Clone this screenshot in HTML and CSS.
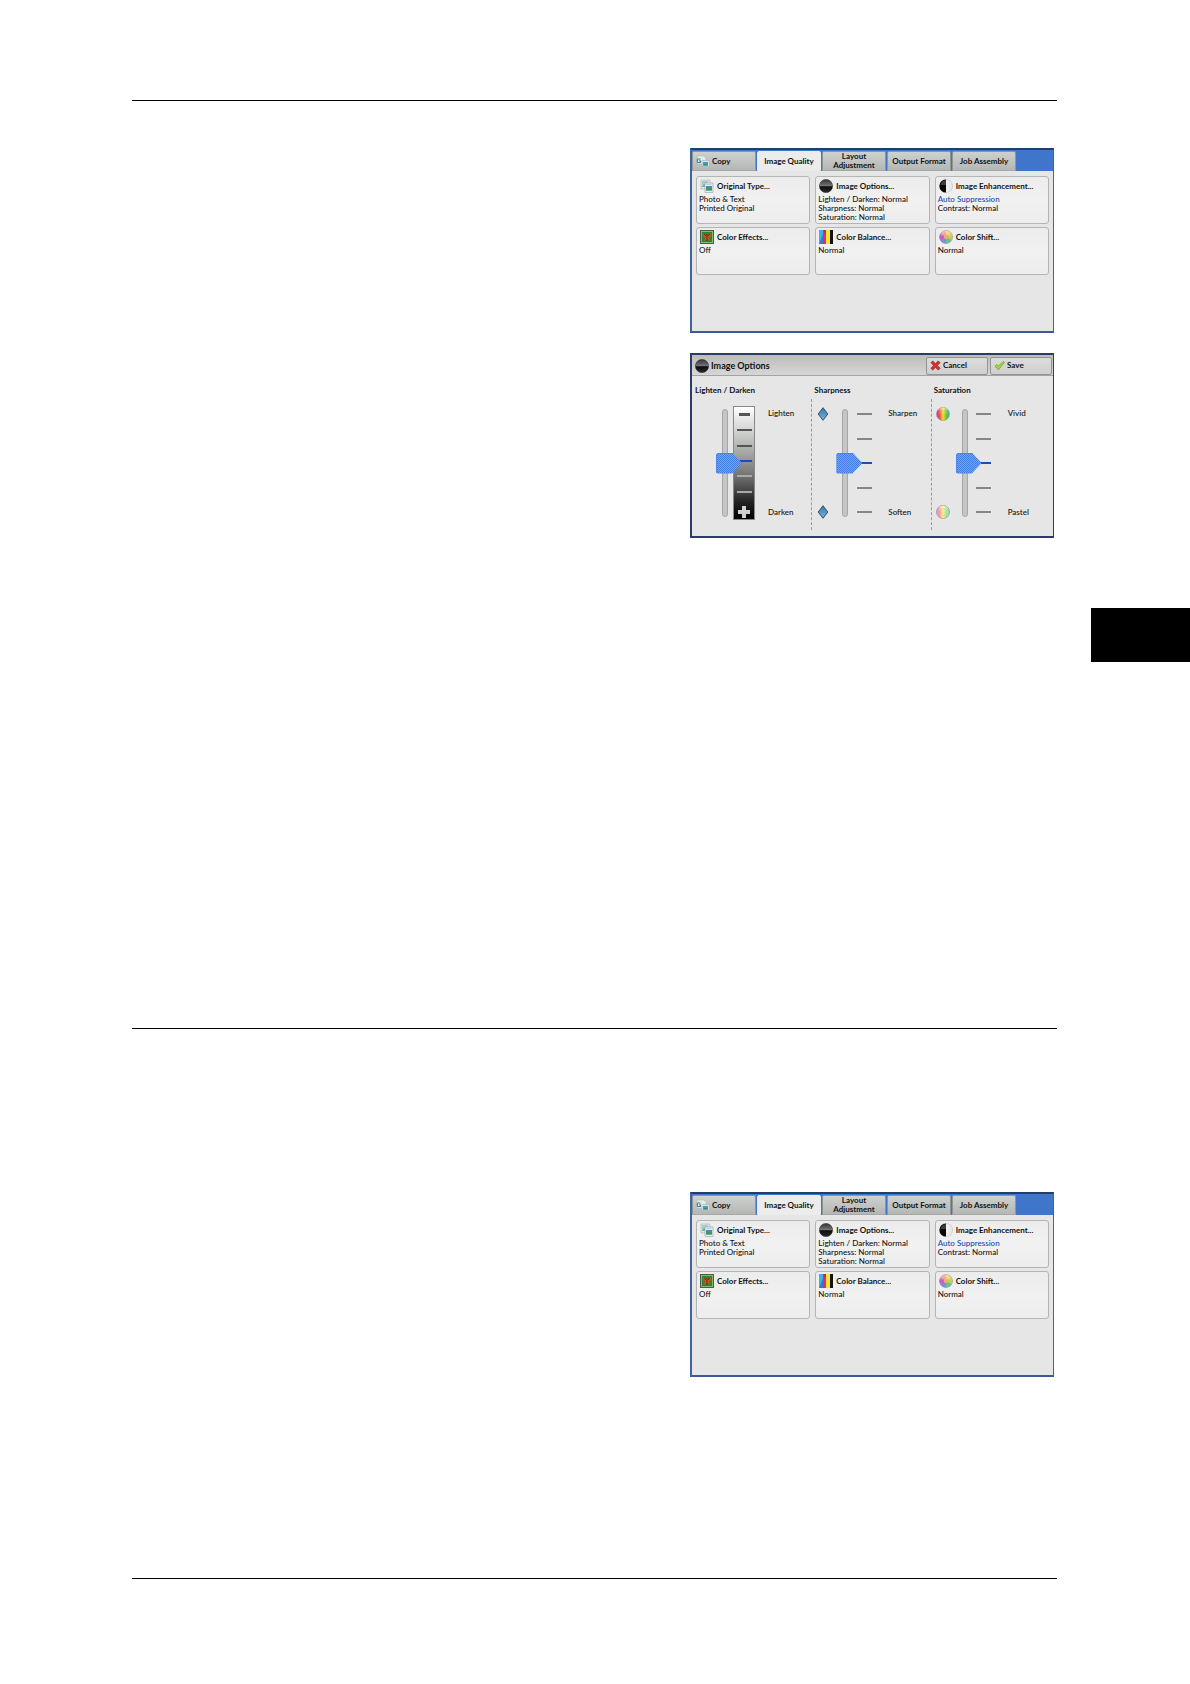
FILE: index.html
```html
<!DOCTYPE html>
<html lang="en">
<head>
  <meta charset="UTF-8">
  <meta name="viewport" content="width=device-width, initial-scale=1.0">
  <title>Image Quality</title>
  <link rel="stylesheet" href="styles.css">
</head>
<body>
  <!-- shared icons -->
  <svg class="sprite" width="0" height="0" aria-hidden="true">
    <defs>
      <linearGradient id="gBall" x1="0" y1="0" x2="0" y2="1">
        <stop offset="0" stop-color="#333"/>
        <stop offset=".5" stop-color="#777"/>
        <stop offset=".55" stop-color="#0c0c0c"/>
        <stop offset="1" stop-color="#2a2a2a"/>
      </linearGradient>
      <linearGradient id="gShade" x1="0" y1="0" x2="1" y2="0">
        <stop offset="0" stop-color="#fff"/>
        <stop offset="1" stop-color="#e4e4e4"/>
      </linearGradient>
      <linearGradient id="gDiamond" x1="0" y1="0" x2="0" y2="1">
        <stop offset="0" stop-color="#3577a8"/>
        <stop offset="1" stop-color="#7ab6dc"/>
      </linearGradient>
      <linearGradient id="gRainbow" x1="0" y1="0" x2="1" y2="0">
        <stop offset="0" stop-color="#c03ad0"/>
        <stop offset=".25" stop-color="#f0504a"/>
        <stop offset=".5" stop-color="#f2dc28"/>
        <stop offset=".75" stop-color="#6cc832"/>
        <stop offset="1" stop-color="#35b5c8"/>
      </linearGradient>
      <linearGradient id="gShine" x1="0" y1="0" x2="0" y2="1">
        <stop offset="0" stop-color="#fff" stop-opacity=".6"/>
        <stop offset=".5" stop-color="#fff" stop-opacity=".1"/>
        <stop offset="1" stop-color="#fff" stop-opacity=".2"/>
      </linearGradient>
    </defs>
    <symbol id="copy" viewBox="0 0 14 12">
      <path d="M1 1h7l2 2v6H1z" fill="#e4ece6" stroke="#a9b4ae" stroke-width=".5"/>
      <path d="M4.500 4H1.300v3.500h3.200V5.800H3" fill="none" stroke="#2e7e96"/>
      <path d="M6 5.500h7.500v6H6z" fill="#cfe5ee" stroke="#9aacb4" stroke-width=".5"/>
      <rect x="7" y="7" width="5" height="3.500" fill="#4a9cc4"/>
      <path d="M7 10.500l2-2 1 1 1-1 1 2z" fill="#3f8a52"/>
    </symbol>
    <symbol id="original" viewBox="0 0 14 14">
      <path d="M1 1h9v9H1z" fill="#dfe9ea" stroke="#9db0b4" stroke-width=".6"/>
      <rect x="2" y="2" width="6" height="4" fill="#a4cbd4"/>
      <path d="M2 8h6V5L6 6 4 5 2 7z" fill="#7fb38b"/>
      <path d="M5 4h8v9.500H5z" fill="#e8f0f2" stroke="#8fa3a8" stroke-width=".6"/>
      <rect x="6" y="7" width="6" height="4.500" fill="#3f91b3"/>
      <path d="M6 11.500V10l2-1.500 2 1 2-1v3z" fill="#4c9457"/>
      <path d="M6.500 5.500h5" stroke="#a9b7bc" stroke-width=".6"/>
    </symbol>
    <symbol id="ball" viewBox="0 0 14 14">
      <circle cx="7" cy="7" r="6.600" fill="url(#gBall)" stroke="#333" stroke-width=".6"/>
    </symbol>
    <symbol id="contrast" viewBox="0 0 14 14">
      <circle cx="7" cy="7" r="6.600" fill="url(#gShade)" stroke="#bbb" stroke-width=".5"/>
      <path d="M7 .4a6.600 6.600 0 0 0 0 13.200z" fill="#080808"/>
      <path d="M7 1.200A5.800 5.800 0 0 0 1.500 6H7z" fill="#3c3c3c"/>
    </symbol>
    <symbol id="effects" viewBox="0 0 14 14">
      <rect x=".5" y=".5" width="13" height="13" fill="#7fc065" stroke="#4f5a4c"/>
      <rect x="2" y="2" width="10" height="10" fill="#2f8434"/>
      <path d="M7 5L3 3v4l2 .5-1.200 3.500L7 9.500l3.200 1.500L9 7.500l2-.5V3z" fill="#c65426"/>
      <path d="M7 4v7M4 4l2 2M10 4L8 6" stroke="#491c10" stroke-width=".7"/>
    </symbol>
    <symbol id="balance" viewBox="0 0 14 14">
      <rect width="4" height="14" fill="#38b4ea"/>
      <rect x="4" width="3" height="14" fill="#e5267e"/>
      <rect x="7" width="4" height="14" fill="#fbe62c"/>
      <rect x="11" width="3" height="14" fill="#111"/>
      <path d="M0 14L4 4v10z" fill="#3f76c8"/>
      <path d="M4 0h3v5z" fill="#c22a3a"/>
    </symbol>
    <symbol id="shift" viewBox="0 0 14 14">
      <circle cx="7" cy="7" r="6.500" fill="#e8787c"/>
      <path d="M7 7V.5a6.500 6.500 0 0 1 5.600 3.300z" fill="#f2c23e"/>
      <path d="M7 7l5.600-3.200a6.500 6.500 0 0 1 0 6.500z" fill="#a8d640"/>
      <path d="M7 7l5.600 3.300A6.500 6.500 0 0 1 7 13.500z" fill="#42bc88"/>
      <path d="M7 7v6.500a6.500 6.500 0 0 1-5.600-3.200z" fill="#6078da"/>
      <path d="M7 7l-5.600 3.300a6.500 6.500 0 0 1 0-6.600z" fill="#bc48c2"/>
      <circle cx="7" cy="7" r="2.300" fill="#f09a58"/>
      <circle cx="7" cy="7" r="6.500" fill="url(#gShine)" stroke="#a99" stroke-width=".5"/>
    </symbol>
    <symbol id="cross" viewBox="0 0 12 12">
      <path d="M1 3l2-2 3 3 3-3 2 2-3 3 3 3-2 2-3-3-3 3-2-2 3-3z" fill="#dc2f2f" stroke="#8f1f22" stroke-width=".8"/>
    </symbol>
    <symbol id="check" viewBox="0 0 12 12">
      <path d="M1 7l2-2 2 1.500L10 1.500l1.500 1L5 10.500z" fill="#a9d92f" stroke="#6d9a2c" stroke-width=".8"/>
    </symbol>
    <symbol id="diamond" viewBox="0 0 14 14">
      <path d="M7 .7L11.800 7 7 13.300 2.200 7z" fill="url(#gDiamond)" stroke="#2b5575"/>
    </symbol>
    <symbol id="vivid" viewBox="0 0 14 14">
      <circle cx="7" cy="7" r="6.600" fill="url(#gRainbow)" stroke="#a88" stroke-width=".5"/>
      <ellipse cx="7" cy="4" rx="5" ry="3.200" fill="url(#gShine)"/>
    </symbol>
    <symbol id="pastel" viewBox="0 0 14 14">
      <circle cx="7" cy="7" r="6.600" fill="#fff" stroke="#888" stroke-width=".6"/>
      <circle cx="7" cy="7" r="6.400" fill="url(#gRainbow)" opacity=".55"/>
      <ellipse cx="7" cy="4" rx="5" ry="3.200" fill="url(#gShine)"/>
    </symbol>
  </svg>

  <main class="page">
    <section class="section section-options">
      <div class="figures">
        <div class="panel">
          <nav class="tabs">
            <button class="tab tab-copy"><svg class="icon-copy"><use href="#copy"/></svg>Copy</button>
            <button class="tab active">Image Quality</button>
            <button class="tab tab-wrap">Layout Adjustment</button>
            <button class="tab">Output Format</button>
            <button class="tab">Job Assembly</button>
          </nav>
          <div class="cards">
            <button class="card">
              <span class="card-title"><svg class="icon"><use href="#original"/></svg>Original Type...</span>
              <span>Photo &amp; Text</span>
              <span>Printed Original</span>
            </button>
            <button class="card">
              <span class="card-title"><svg class="icon"><use href="#ball"/></svg>Image Options...</span>
              <span>Lighten / Darken: Normal</span>
              <span>Sharpness: Normal</span>
              <span>Saturation: Normal</span>
            </button>
            <button class="card">
              <span class="card-title"><svg class="icon"><use href="#contrast"/></svg>Image Enhancement...</span>
              <span class="changed">Auto Suppression</span>
              <span>Contrast: Normal</span>
            </button>
            <button class="card">
              <span class="card-title"><svg class="icon"><use href="#effects"/></svg>Color Effects...</span>
              <span>Off</span>
            </button>
            <button class="card">
              <span class="card-title"><svg class="icon"><use href="#balance"/></svg>Color Balance...</span>
              <span>Normal</span>
            </button>
            <button class="card">
              <span class="card-title"><svg class="icon"><use href="#shift"/></svg>Color Shift...</span>
              <span>Normal</span>
            </button>
          </div>
        </div>

        <div class="panel panel-dialog">
          <header class="dialog-head">
            <svg class="icon"><use href="#ball"/></svg>
            <h2>Image Options</h2>
            <button class="action"><svg class="icon-action"><use href="#cross"/></svg>Cancel</button>
            <button class="action"><svg class="icon-action"><use href="#check"/></svg>Save</button>
          </header>
          <div class="levels">
            <div class="level">
              <label for="lighten">Lighten / Darken</label>
              <div class="control">
                <div class="marks"></div>
                <input id="lighten" type="range" min="-3" max="3" value="0">
                <div class="scale scale-gray">
                  <i></i><i></i><i></i><i class="current"></i><i class="light"></i><i class="light"></i><i class="plus"></i>
                </div>
                <div class="names"><span>Lighten</span><span>Darken</span></div>
              </div>
            </div>
            <div class="level">
              <label for="sharpness">Sharpness</label>
              <div class="control">
                <div class="marks">
                  <svg class="icon"><use href="#diamond"/></svg>
                  <svg class="icon"><use href="#diamond"/></svg>
                </div>
                <input id="sharpness" type="range" min="-2" max="2" value="0">
                <div class="scale"><i></i><i></i><i class="current"></i><i></i><i></i></div>
                <div class="names"><span>Sharpen</span><span>Soften</span></div>
              </div>
            </div>
            <div class="level">
              <label for="saturation">Saturation</label>
              <div class="control">
                <div class="marks">
                  <svg class="icon"><use href="#vivid"/></svg>
                  <svg class="icon"><use href="#pastel"/></svg>
                </div>
                <input id="saturation" type="range" min="-2" max="2" value="0">
                <div class="scale"><i></i><i></i><i class="current"></i><i></i><i></i></div>
                <div class="names"><span>Vivid</span><span>Pastel</span></div>
              </div>
            </div>
          </div>
        </div>
      </div>
      <div class="thumb-index"></div>
    </section>

    <section class="section section-enhancement">
      <div class="figures">
        <div class="panel">
          <nav class="tabs">
            <button class="tab tab-copy"><svg class="icon-copy"><use href="#copy"/></svg>Copy</button>
            <button class="tab active">Image Quality</button>
            <button class="tab tab-wrap">Layout Adjustment</button>
            <button class="tab">Output Format</button>
            <button class="tab">Job Assembly</button>
          </nav>
          <div class="cards">
            <button class="card">
              <span class="card-title"><svg class="icon"><use href="#original"/></svg>Original Type...</span>
              <span>Photo &amp; Text</span>
              <span>Printed Original</span>
            </button>
            <button class="card">
              <span class="card-title"><svg class="icon"><use href="#ball"/></svg>Image Options...</span>
              <span>Lighten / Darken: Normal</span>
              <span>Sharpness: Normal</span>
              <span>Saturation: Normal</span>
            </button>
            <button class="card">
              <span class="card-title"><svg class="icon"><use href="#contrast"/></svg>Image Enhancement...</span>
              <span class="changed">Auto Suppression</span>
              <span>Contrast: Normal</span>
            </button>
            <button class="card">
              <span class="card-title"><svg class="icon"><use href="#effects"/></svg>Color Effects...</span>
              <span>Off</span>
            </button>
            <button class="card">
              <span class="card-title"><svg class="icon"><use href="#balance"/></svg>Color Balance...</span>
              <span>Normal</span>
            </button>
            <button class="card">
              <span class="card-title"><svg class="icon"><use href="#shift"/></svg>Color Shift...</span>
              <span>Normal</span>
            </button>
          </div>
        </div>
      </div>
    </section>
    <footer class="footer"></footer>
  </main>
</body>
</html>
```
FILE: styles.css
```css
* {
  box-sizing: border-box;
  margin: 0;
  padding: 0;
}
body {
  background: #fff;
  color: #111;
  font-family: Lato, "Noto Sans", sans-serif;
  font-size: 8px;
  font-weight: 500;
  line-height: 9px;
}
button {
  font: inherit;
  color: inherit;
  border: 0;
  cursor: pointer;
}
.sprite {
  position: absolute;
}
.page {
  padding: 100px 133px 0 132px;
}
.section {
  display: flex;
  flex-direction: column;
  border-top: 1px solid #000;
}
.section-options {
  min-height: 928px;
  padding-top: 47px;
}
.section-enhancement {
  min-height: 550px;
  padding-top: 163px;
}
.footer {
  height: 100px;
  border-top: 1px solid #000;
}
/* the left part is left free */
.figures {
  display: grid;
  grid-template-columns: 558fr 364fr;
  row-gap: 20px;
  padding-right: 3px;
}
.figures .panel {
  grid-column: 2;
}
/* black index at the page edge */
.thumb-index {
  align-self: flex-end;
  width: 99px;
  height: 54px;
  margin: 70px -133px 0 0;
  background: #000;
}

.panel {
  display: flex;
  flex-direction: column;
  min-height: 185px;
  border: 1px solid #3f659c;
  border-left-width: 2px;
  border-top: 2px solid #243f66;
  border-bottom: 2px solid #3a5c92;
  background: #e6e6e6;
}
.tabs {
  display: flex;
  gap: 1px;
  height: 21px;
  padding-top: 1px;
  background: #3f76cc;
}
.tab {
  display: flex;
  align-items: center;
  justify-content: center;
  flex: 0 0 64px;
  line-height: 9px;
  font-weight: 700;
  background: linear-gradient(#cfd1cf, #b4b7b4);
  border: 1px solid #8e9698;
  border-bottom-color: #a4a8a6;
  border-radius: 2px 2px 0 0;
}
.tab.active {
  background: #ececec;
  border-color: #ececec;
}
.tab-copy {
  justify-content: flex-start;
  gap: 2px;
  padding-left: 3px;
}
.tab-wrap {
  padding: 0 8px;
}
.icon {
  flex: none;
  width: 14px;
  height: 14px;
}
.icon-copy {
  flex: none;
  width: 14px;
  height: 12px;
}
.cards {
  display: grid;
  grid-template-columns: repeat(3, 1fr);
  grid-auto-rows: 48px;
  gap: 3px 5px;
  padding: 5px 4px;
}
.card {
  display: flex;
  flex-direction: column;
  align-items: flex-start;
  padding: 2px;
  white-space: nowrap;
  background: linear-gradient(#ececec, #f1f1f1 50%, #ededed);
  border: 1px solid #b4b4b4;
  border-radius: 3px;
}
.card-title {
  display: flex;
  align-items: center;
  gap: 3px;
  padding: 0 0 2px 1px;
  font-weight: 700;
}
.changed {
  color: #1c48ae;
}

.panel-dialog {
  border-color: #2b3c66;
}
.dialog-head {
  display: flex;
  align-items: center;
  height: 21px;
  padding: 1px 1px 0 3px;
  background: linear-gradient(#bcbdbb, #d6d6d6);
  border-bottom: 1px solid #a3a3a3;
}
.dialog-head h2 {
  flex: 1;
  padding-left: 2px;
  font-size: 9px;
  font-weight: 700;
}
.action {
  display: flex;
  align-items: center;
  gap: 2px;
  width: 62px;
  height: 18px;
  margin-left: 2px;
  padding: 0 3px;
  font-weight: 700;
  background: linear-gradient(#dcdcdc, #cfcfcf);
  border: 1px solid #949494;
  border-radius: 2px;
}
.icon-action {
  width: 11px;
  height: 11px;
}
.levels {
  display: grid;
  grid-template-columns: repeat(3, 1fr);
  padding: 10px 3px 0 0;
}
.level label {
  padding-left: 3px;
  font-weight: 700;
}
.control {
  display: grid;
  grid-template-columns: 30px 6px 22px 1fr;
  height: 131px;
  margin-top: 4px;
  padding: 7px 0 10px;
}
.level + .level .control {
  border-left: 1px dashed #999;
}
.marks,
.names,
.scale {
  display: flex;
  flex-direction: column;
  justify-content: space-between;
}
.marks {
  padding: 1px 0 1px 4px;
}
.names {
  margin-left: 5px;
  padding: 3px 0 3px 13px;
}
.scale {
  align-items: center;
  margin: 0 -5px 0 5px;
  padding: 7px 0;
}
.scale i {
  width: 15px;
  height: 2px;
  background: #868686;
}
.scale-gray {
  background: linear-gradient(#fff, #b3b5b3 35%, #777 60%, #222 85%, #000);
  border: 1px solid #888;
  padding: 6px 0 1px;
}
.scale-gray i {
  background: #555;
}
.scale-gray .light {
  background: #aaa;
}
.scale .current {
  background: #1d4fae;
}
.scale-gray i:first-child {
  width: 11px;
  height: 3px;
}
.scale-gray .plus {
  width: 12px;
  height: 12px;
  background:
    linear-gradient(#d0d0d0, #d0d0d0) center / 12px 4px no-repeat,
    linear-gradient(#d0d0d0, #d0d0d0) center / 4px 12px no-repeat;
}

/* vertical sliders */
input[type="range"] {
  appearance: none;
  -webkit-appearance: none;
  writing-mode: vertical-lr;
  direction: rtl;
  z-index: 1;
  width: 6px;
  height: 108px;
  margin-top: 3px;
  overflow: visible;
  background: #c6c6c6;
  border: 1px solid #a6a6a6;
  border-radius: 3px;
}
input[type="range"]::-webkit-slider-runnable-track {
  width: 4px;
}
input[type="range"]::-webkit-slider-thumb {
  -webkit-appearance: none;
  width: 26px;
  height: 21px;
  margin-left: -7px;
  background: repeating-conic-gradient(#3f7be0 0 25%, #78a6f2 0 50%) 0 0 / 2px 2px;
  border: 1px solid #4a86ea;
  border-radius: 2px;
  clip-path: polygon(0 0, 62% 0, 100% 50%, 62% 100%, 0 100%);
}
```
